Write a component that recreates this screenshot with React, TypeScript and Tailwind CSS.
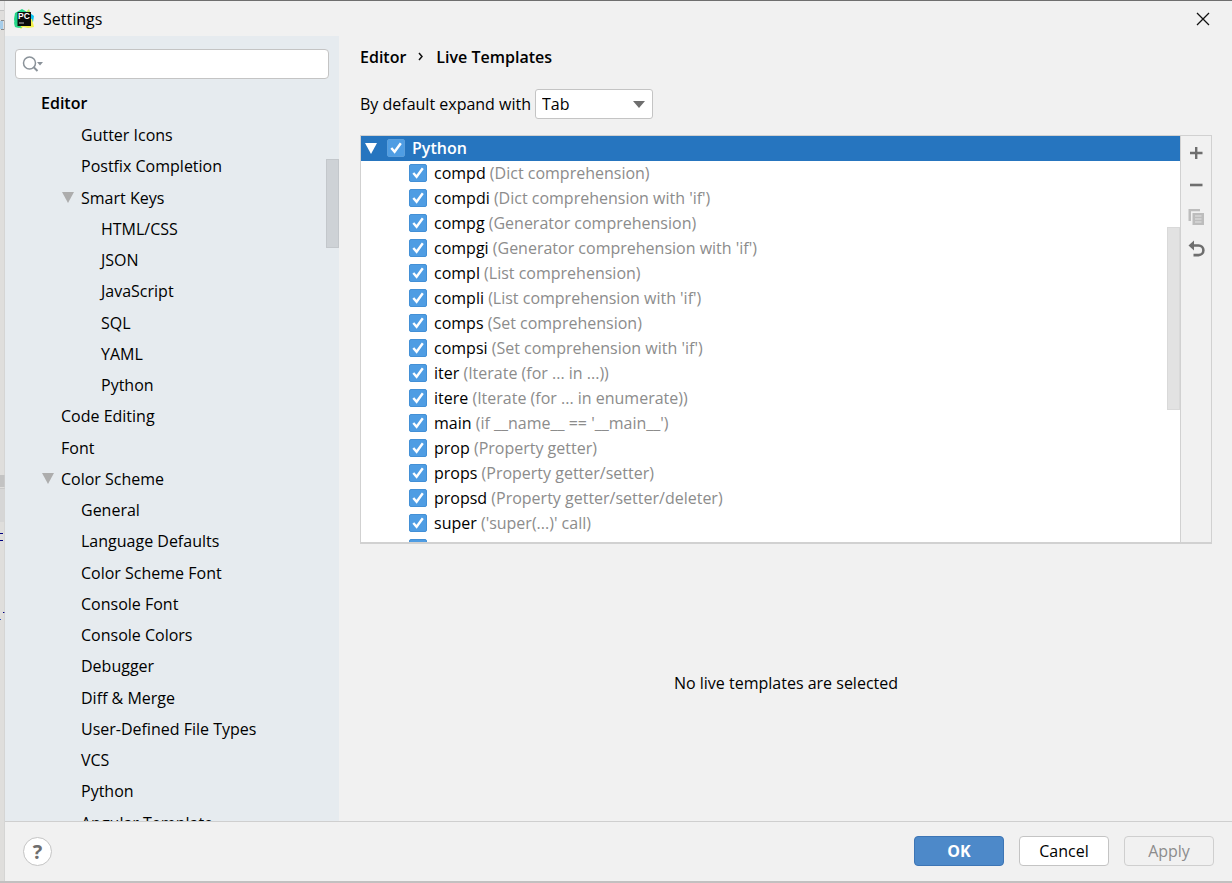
import React, { useState } from 'react';
import clsx from 'clsx';

interface TreeItem {
  label: string;
  indent: string;
  expandable?: boolean;
  heading?: boolean;
}

const L0 = 'pl-[18px]';
const L1 = 'pl-[38px]';
const L2 = 'pl-[58px]';
const L3 = 'pl-[78px]';

const TREE: TreeItem[] = [
  { label: 'Editor', indent: L0, heading: true },
  { label: 'Gutter Icons', indent: L2 },
  { label: 'Postfix Completion', indent: L2 },
  { label: 'Smart Keys', indent: L2, expandable: true },
  { label: 'HTML/CSS', indent: L3 },
  { label: 'JSON', indent: L3 },
  { label: 'JavaScript', indent: L3 },
  { label: 'SQL', indent: L3 },
  { label: 'YAML', indent: L3 },
  { label: 'Python', indent: L3 },
  { label: 'Code Editing', indent: L1 },
  { label: 'Font', indent: L1 },
  { label: 'Color Scheme', indent: L1, expandable: true },
  { label: 'General', indent: L2 },
  { label: 'Language Defaults', indent: L2 },
  { label: 'Color Scheme Font', indent: L2 },
  { label: 'Console Font', indent: L2 },
  { label: 'Console Colors', indent: L2 },
  { label: 'Debugger', indent: L2 },
  { label: 'Diff & Merge', indent: L2 },
  { label: 'User-Defined File Types', indent: L2 },
  { label: 'VCS', indent: L2 },
  { label: 'Python', indent: L2 },
  { label: 'Angular Template', indent: L2 },
];

const TEMPLATES: [string, string][] = [
  ['compd', 'Dict comprehension'],
  ['compdi', "Dict comprehension with 'if'"],
  ['compg', 'Generator comprehension'],
  ['compgi', "Generator comprehension with 'if'"],
  ['compl', 'List comprehension'],
  ['compli', "List comprehension with 'if'"],
  ['comps', 'Set comprehension'],
  ['compsi', "Set comprehension with 'if'"],
  ['iter', 'Iterate (for ... in ...)'],
  ['itere', 'Iterate (for ... in enumerate)'],
  ['main', "if __name__ == '__main__'"],
  ['prop', 'Property getter'],
  ['props', 'Property getter/setter'],
  ['propsd', 'Property getter/setter/deleter'],
  ['super', "'super(...)' call"],
];

const Triangle: React.FC<{ className: string }> = ({ className }) => (
  <svg viewBox="0 0 12 11" className={clsx('w-3 h-[11px] shrink-0', className)}>
    <path d="M0 0H12L6 11Z" fill="currentColor" />
  </svg>
);

const PyCharmLogo = () => (
  <svg viewBox="0 0 20 20" className="w-5 h-5">
    <path d="M1 4L8 0L13 3L11 12L6 19L1 18L0 10Z" fill="#21d789" />
    <path d="M12 3L15 0L17 5L13 8Z" fill="#b5e35a" />
    <path d="M16 4L20 7L19 13L15 11Z" fill="#07c3f2" />
    <path d="M11 8L18 10L20 18L14 19L9 18L7 20L4 17Z" fill="#f3f04a" />
    <path d="M0 13L5 15L8 19L1 18Z" fill="#2bd98a" />
    <rect x="3.5" y="3" width="13.5" height="14" fill="#0b0b0b" />
    <text x="4" y="10" fontSize="8.5" fontWeight="700" fill="#fff" fontFamily="Liberation Sans, sans-serif">PC</text>
    <rect x="5" y="13.5" width="5" height="1" fill="#bbb" />
  </svg>
);

interface CheckProps {
  label?: React.ReactNode;
  selected?: boolean;
}

const CheckRow: React.FC<CheckProps> = ({ label, selected }) => {
  const [checked, setChecked] = useState(true);
  return (
    <label className="flex items-center gap-[7px] h-[25px] pb-px whitespace-nowrap">
      <span className="grid shrink-0">
        <input
          type="checkbox"
          checked={checked}
          onChange={() => setChecked(!checked)}
          className={clsx(
            'col-start-1 row-start-1 appearance-none w-[18px] h-[18px] rounded-[2px] border bg-white checked:bg-[#4f9de3]',
            selected ? 'border-[#5b9fdc]' : 'border-[#4390d6]'
          )}
        />
        {checked && (
          <svg viewBox="0 0 18 18" className="col-start-1 row-start-1 w-[18px] h-[18px] pointer-events-none">
            <path d="M4.3 9L7.6 12.8L13.8 4.2" fill="none" stroke="#fff" strokeWidth="2.4" />
          </svg>
        )}
      </span>
      <span>{label}</span>
    </label>
  );
};

const toolButton = 'flex items-center justify-center w-[30px] h-8 text-[#6e6e6e] disabled:text-[#bdbdbd]';
const dialogButton = 'w-[90px] h-[30px] rounded-[4px] border';

const Toolbar = () => (
  <div className="flex flex-col items-center w-[31px] shrink-0 border-l border-[#d1d1d1]">
    <button aria-label="Add" className={toolButton}>
      <svg viewBox="0 0 20 20" className="w-5 h-5">
        <path d="M4 11H16.5M10.2 5V17" stroke="currentColor" strokeWidth="2.4" />
      </svg>
    </button>
    <button aria-label="Remove" className={toolButton}>
      <svg viewBox="0 0 20 20" className="w-5 h-5">
        <path d="M4 11H16.5" stroke="currentColor" strokeWidth="2.6" />
      </svg>
    </button>
    <button aria-label="Duplicate" disabled className={toolButton}>
      <svg viewBox="0 0 20 20" className="w-5 h-5">
        <path d="M2.5 15V3H14V5.2H5V15Z" fill="currentColor" />
        <path d="M6.5 7H18V19H6.5Z" fill="currentColor" />
        <path d="M9 10H15.5M9 13H15.5M9 16H15.5" stroke="#e4e4e4" />
      </svg>
    </button>
    <button aria-label="Restore defaults" className={toolButton}>
      <svg viewBox="0 0 20 20" className="w-5 h-5">
        <path d="M6 7.5H12.6A4.8 4.8 0 0 1 12.6 17.1H7.5" fill="none" stroke="currentColor" strokeWidth="2.6" />
        <path d="M2.5 7.5L8 2.5V12.5Z" fill="currentColor" />
      </svg>
    </button>
  </div>
);

const Sidebar = () => (
  <aside className="flex flex-col w-[334px] shrink-0 min-h-0 bg-[#e6ebef]">
    <div className="flex items-center mx-[10px] mt-[13px] h-[30px] shrink-0 rounded-[4px] border border-[#c4c4c4] bg-white">
      <svg viewBox="0 0 22 18" className="ml-1.5 w-[22px] h-[18px] shrink-0 text-[#8a9299]">
        <circle cx="7.5" cy="8" r="6" fill="none" stroke="currentColor" strokeWidth="1.5" />
        <path d="M11.5 12L15.5 16" stroke="currentColor" strokeWidth="2" />
        <path d="M15 7H21L18 10.5Z" fill="currentColor" />
      </svg>
      <input type="text" aria-label="Search settings" className="flex-1 min-w-0 h-full px-1 outline-none" />
    </div>
    <div className="flex flex-1 min-h-0 mt-2 overflow-hidden">
      <ul className="flex-1 min-w-0">
        {TREE.map((item, i) => (
          <li
            key={i}
            className={clsx(
              'flex items-center h-[31px] nth-[4n+3]:h-8 first:h-8 whitespace-nowrap',
              item.indent,
              item.heading && 'font-semibold'
            )}
          >
            <span className="w-[18px] shrink-0">
              {item.expandable && <Triangle className="-ml-px text-[#adadad]" />}
            </span>
            <span>{item.label}</span>
          </li>
        ))}
      </ul>
      <div className="w-[13px] h-[89px] mt-[72px] shrink-0 border border-[#c3c7cb] bg-[#ced2d6]" />
    </div>
  </aside>
);

const TemplateList = () => (
  <div className="flex h-[409px] shrink-0 border border-b-2 border-[#d1d1d1]">
    <div className="flex-1 min-w-0 bg-white overflow-hidden">
      <div className="flex items-center gap-2.5 pl-1 h-[25px] bg-[#2675bf] text-white font-semibold">
        <Triangle className="text-white" />
        <CheckRow selected label="Python" />
      </div>
      <div className="flex">
        <ul className="flex-1 min-w-0 pl-12">
          {TEMPLATES.map(([name, description]) => (
            <li key={name}>
              <CheckRow
                label={
                  <>
                    {name} <span className="text-[#8c8c8c]">({description})</span>
                  </>
                }
              />
            </li>
          ))}
          <li>
            <CheckRow />
          </li>
        </ul>
        <div className="w-[13px] h-[183px] mt-[66px] shrink-0 border border-[#d9d9d9] bg-[#e2e2e2]" />
      </div>
    </div>
    <Toolbar />
  </div>
);

// Sliver of the editor window that shows to the left of the dialog
const BackgroundEdge = () => (
  <svg viewBox="0 0 5 880" preserveAspectRatio="xMinYMin slice" className="w-[5px] h-full shrink-0">
    <rect width="5" height="880" fill="#dfdedc" />
    <rect width="4" height="10" fill="#e9e9e9" />
    <rect y="9" width="4" height="1" fill="#c4c4c4" />
    <rect y="20" width="3" height="8" fill="#a6cdea" />
    <path d="M1 19.5H4.5V28.5H1" fill="none" stroke="#8a8a8a" />
    <rect y="474" width="5" height="12" fill="#c3c3c3" />
    <rect y="487" width="5" height="1" fill="#c9c9c9" />
    <rect y="488" width="4" height="33" fill="#d6d6d6" />
    <rect y="532" width="3" height="1" fill="#000080" />
    <rect y="539" width="3" height="1" fill="#000080" />
    <rect x="3" y="611" width="2" height="1" fill="#000080" />
    <rect y="618" width="1" height="1" fill="#3050c0" />
    <rect x="4" width="1" height="880" fill="#cfcfcf" opacity="0.6" />
  </svg>
);

export default function App() {
  return (
    <div className="flex h-screen border-t border-[#6f6f6f] pb-[2px] bg-[#c2c0c0] text-black text-[16px] leading-5 font-['Open_Sans',sans-serif] overflow-hidden">
      <BackgroundEdge />
      <div className="flex flex-col flex-1 min-w-0 bg-[#f1f1f1]">
        <header className="flex items-center justify-between h-[35px] shrink-0 pl-[9px] pr-[22px]">
          <div className="flex items-center gap-[9px]">
            <PyCharmLogo />
            <h1>Settings</h1>
          </div>
          <button aria-label="Close">
            <svg viewBox="0 0 14 14" className="w-3.5 h-3.5">
              <path d="M1 1L13 13M13 1L1 13" stroke="#111" strokeWidth="1.3" />
            </svg>
          </button>
        </header>

        <div className="flex flex-1 min-h-0">
          <Sidebar />
          <main className="flex flex-col flex-1 min-w-0 pl-[21px] pr-5 pt-[11px]">
            <nav className="flex items-center gap-3 font-semibold">
              <span>Editor</span>
              <svg viewBox="0 0 6 10" className="w-1.5 h-2.5">
                <path d="M1 1L4 4.5L1 8" fill="none" stroke="#111" strokeWidth="1.5" />
              </svg>
              <span>Live Templates</span>
            </nav>
            <div className="flex items-center gap-1 mt-[22px] mb-4">
              <label htmlFor="expand">By default expand with</label>
              <div className="grid items-center">
                <select
                  id="expand"
                  className="col-start-1 row-start-1 appearance-none w-[118px] h-[30px] pl-1.5 rounded-[3px] border border-[#c4c4c4] bg-white"
                >
                  <option>Tab</option>
                  <option>Enter</option>
                  <option>Space</option>
                </select>
                <svg viewBox="0 0 12 7" className="col-start-1 row-start-1 justify-self-end mr-2 w-3 h-[7px] pointer-events-none">
                  <path d="M0 0H12L6 7Z" fill="#6e6e6e" />
                </svg>
              </div>
            </div>
            <TemplateList />
            <div className="flex flex-1 items-center justify-center">No live templates are selected</div>
          </main>
        </div>

        <footer className="flex items-center justify-between h-[60px] shrink-0 border-t border-[#cfcfcf] px-[18px]">
          <button aria-label="Help" className="flex items-center justify-center w-[29px] h-[29px] rounded-full border border-[#c4c4c4] bg-white text-[20px] font-bold text-[#6e6e6e]">
            ?
          </button>
          <div className="flex gap-[15px] pb-px">
            <button className={clsx(dialogButton, 'border-[#3d75b5] bg-[#4d89c9] text-white font-bold')}>OK</button>
            <button className={clsx(dialogButton, 'border-[#c4c4c4] bg-white')}>Cancel</button>
            <button disabled className={clsx(dialogButton, 'border-[#cfcfcf] text-[#8c8c8c]')}>Apply</button>
          </div>
        </footer>
      </div>
    </div>
  );
}
